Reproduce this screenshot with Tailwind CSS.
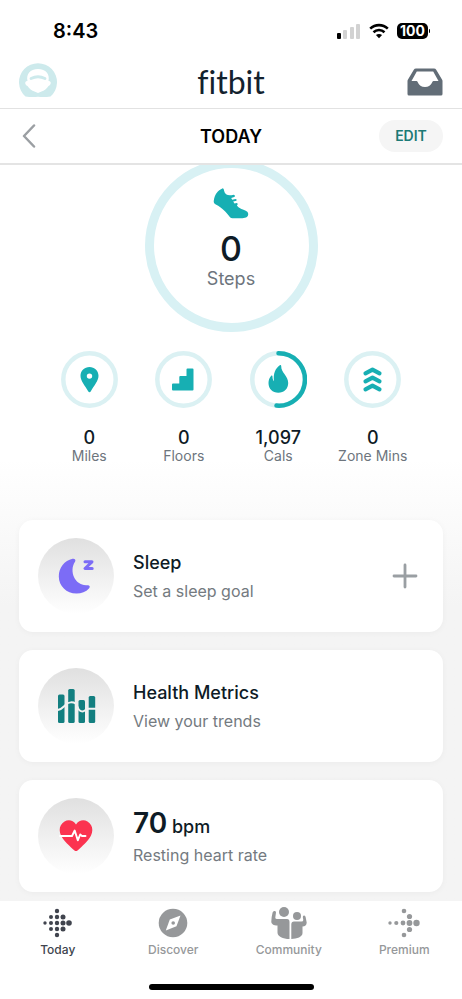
<!DOCTYPE html>
<html lang="en">
<head>
<meta charset="utf-8">
<meta name="viewport" content="width=device-width, initial-scale=1">
<title>Fitbit – Today</title>
<script src="https://cdn.jsdelivr.net/npm/@tailwindcss/browser@4"></script>
</head>
<body class="flex h-screen flex-col overflow-hidden bg-white font-['Inter','Liberation_Sans',sans-serif] text-[#0e1b26]">

<!-- Status bar -->
<div class="flex h-14 shrink-0 items-center justify-between pt-[6px] pr-8 pl-[53px] text-black">
  <span class="text-xl leading-6 font-semibold">8:43</span>
  <div class="flex items-center gap-2">
    <svg class="h-4 w-6" viewBox="0 0 24 16" aria-hidden="true">
      <rect x="0" y="10" width="4" height="6" rx="1"/>
      <g fill="#d2d2d2"><rect x="6" y="7" width="4" height="9" rx="1"/><rect x="13" y="4" width="4" height="12" rx="1"/><rect x="19" y="1" width="4" height="15" rx="1"/></g>
    </svg>
    <svg class="h-4 w-5" viewBox="0 0 20 16" fill="none" stroke="#000" stroke-width="2.6" aria-hidden="true">
      <path d="M1.200 5.600C6.200.900 13.800.900 18.800 5.600"/><path d="M4.500 9.200C7.600 6.300 12.400 6.300 15.500 9.200"/>
      <path d="M10 15.300 6.900 12.100C8.600 10.500 11.400 10.500 13.100 12.100Z" fill="#000" stroke="none"/>
    </svg>
    <div class="flex items-center gap-px">
      <span class="rounded-[5px] bg-black px-[3px] text-sm leading-4 font-bold text-white">100</span>
      <span class="h-1 w-px rounded-r bg-black"></span>
    </div>
  </div>
</div>

<!-- App header -->
<header class="grid h-[53px] shrink-0 grid-cols-[1fr_auto_1fr] items-center border-b border-[#e2e2e2] px-[19px]">
  <button aria-label="Account" class="justify-self-start">
    <svg class="size-[38px]" viewBox="0 0 38 38" aria-hidden="true">
      <path fill="#cdeaec" d="M6.500 33.500A19 19 0 1 1 31.500 33.500Q25 34.500 19 33.800 13 34.500 6.500 33.500Z"/>
      <path fill="#fff" d="M8.500 18C7 11 11 6 19 6S31 11 29.500 18C32.500 17.500 32.500 22 29.500 23 28 25.500 25 28 22.500 28.500L19 30 15.500 28.500C13 28 10 25.500 8.500 23 5.500 22 5.500 17.500 8.500 18Z"/>
      <path d="M12 15.500Q19 12 26 15.500" fill="none" stroke="#cdeaec" stroke-width="2.800" stroke-linecap="round"/>
    </svg>
  </button>
  <span class="font-['Lato',sans-serif] text-[32px] leading-10 text-[#13222e] [font-variant-ligatures:none]">fitbit</span>
  <button aria-label="Inbox" class="justify-self-end">
    <svg class="h-7 w-9" viewBox="0 0 36 28" aria-hidden="true">
      <path fill="#626d77" fill-rule="evenodd" d="M9 .500H27Q28.500.500 29.200 1.800L35 11.500Q35.500 12.300 35.500 13V26Q35.500 27.500 34 27.500H2Q.500 27.500.500 26V13Q.500 12.300 1 11.500L6.800 1.800Q7.500.500 9 .500ZM9.800 3.500 4.500 13H9.500C11.500 13 10.800 19 18 19S24.500 13 26.500 13H31.500L26.200 3.500Z"/>
    </svg>
  </button>
</header>

<!-- Date bar -->
<div class="grid h-14 shrink-0 grid-cols-[1fr_auto_1fr] items-center border-b-2 border-[#e4e4e4] px-[19px]">
  <button aria-label="Previous day" class="justify-self-start pl-[3px]">
    <svg class="h-6 w-[14px]" viewBox="0 0 14 24" fill="none" stroke="#9b9fa3" stroke-width="2.500" stroke-linecap="round" stroke-linejoin="round" aria-hidden="true"><path d="M12 1.500 2 12 12 22.500"/></svg>
  </button>
  <h1 class="pt-px text-lg leading-6 font-semibold text-black">TODAY</h1>
  <button class="h-8 w-16 justify-self-end rounded-full bg-[#f5f5f5] text-sm font-semibold text-[#1c7a76]">EDIT</button>
</div>

<main class="min-h-0 flex-1 overflow-hidden bg-linear-to-b from-white from-40% to-[#f4f4f4] to-60%">
  <!-- Steps -->
  <section class="mx-auto -mt-[6px] flex size-[173px] flex-col items-center rounded-full border-[9px] border-[#d8f1f4] pt-5" aria-label="Steps">
    <svg class="h-[31px] w-9" viewBox="0 0 36 31" fill="#17afb3" aria-hidden="true">
      <path d="M9.800.300Q11 .500 11 2.500C12 7 15.500 8.200 20.500 6.800 22.500 7 22.500 9 20.500 9.300L18.200 9.900 19.200 11.800 22.500 10.900C24 11 24 12.800 22.500 13L20.200 13.600 21.500 15.500 23.700 15C25.200 15.200 25 17 23.800 17.300 25.500 20 27.500 20.700 30.500 21.700 34 22.800 35.500 24.500 35.200 26.500 35 29.300 32 30.300 28 30.300H19.500Q18 30.300 17 29.200C13 24 9.500 20 2.800 16.500 1 15.500.500 14.300.800 12.500 1.800 6.500 4.500 2.500 9.800.300Z"/>
    </svg>
    <span class="mt-[10px] text-[34px] leading-10 font-medium">0</span>
    <span class="text-lg leading-5 text-[#6d757d]">Steps</span>
  </section>

  <!-- Daily stats -->
  <section class="mt-[19px] grid grid-cols-4 px-[42px] text-center" aria-label="Daily stats">
    <div class="flex flex-col items-center">
      <svg class="size-[57px]" viewBox="0 0 57 57" aria-hidden="true">
        <circle cx="28.500" cy="28.500" r="26.200" fill="none" stroke="#dbf1f3" stroke-width="4.500"/>
        <path fill="#17afb3" fill-rule="evenodd" d="M28.500 16C33.500 16 37.500 19.800 37.500 24.700 37.500 30 33 34.500 30 40Q28.500 42.500 27 40C24 34.500 19.500 30 19.500 24.700 19.500 19.800 23.500 16 28.500 16ZM28.500 22.400A2.700 2.700 0 1 0 28.500 27.800 2.700 2.700 0 1 0 28.500 22.400Z"/>
      </svg>
      <span class="mt-5 text-lg leading-5 font-medium">0</span>
      <span class="text-sm leading-4 text-[#6d757d]">Miles</span>
    </div>
    <div class="flex flex-col items-center">
      <svg class="size-[57px]" viewBox="0 0 57 57" aria-hidden="true">
        <circle cx="28.500" cy="28.500" r="26.200" fill="none" stroke="#dbf1f3" stroke-width="4.500"/>
        <path fill="#17afb3" d="M32.500 17.500H37.500Q38.500 17.500 38.500 18.500V38.500Q38.500 39.500 37.500 39.500H18Q17 39.500 17 38.500V33.500Q17 32.500 18 32.500H24.300V26Q24.300 25 25.300 25H31.500V18.500Q31.500 17.500 32.500 17.500Z"/>
      </svg>
      <span class="mt-5 text-lg leading-5 font-medium">0</span>
      <span class="text-sm leading-4 text-[#6d757d]">Floors</span>
    </div>
    <div class="flex flex-col items-center">
      <svg class="size-[57px]" viewBox="0 0 57 57" aria-hidden="true">
        <circle cx="28.500" cy="28.500" r="26.200" fill="none" stroke="#dbf1f3" stroke-width="4.500"/>
        <path d="M28.500 2.300A26.200 26.200 0 1 1 26.500 54.600" fill="none" stroke="#17afb3" stroke-width="4.500" stroke-linecap="round"/>
        <path fill="#17afb3" d="M29.800 14.300C30.500 13.800 31.200 14.200 31.200 15 31 22 38.200 24.500 38.200 32 38.200 37.800 34 41.800 28.300 41.800S18.500 37.800 18.500 32C18.500 29 19.500 26.800 21 25 21.700 24.300 22.500 24.600 22.500 25.500 22.500 27.500 22.800 28.800 24 30.200 23 22.500 25.500 17.200 29.800 14.300Z"/>
      </svg>
      <span class="mt-5 text-lg leading-5 font-medium">1,097</span>
      <span class="text-sm leading-4 text-[#6d757d]">Cals</span>
    </div>
    <div class="flex flex-col items-center">
      <svg class="size-[57px]" viewBox="0 0 57 57" fill="none" aria-hidden="true">
        <circle cx="28.500" cy="28.500" r="26.200" stroke="#dbf1f3" stroke-width="4.500"/>
        <path d="M21.500 22.300 28.500 18.700 35.500 22.300M21.500 30.300 28.500 26.700 35.500 30.300M21.500 38.300 28.500 34.700 35.500 38.300" stroke="#17afb3" stroke-width="4.200" stroke-linecap="round" stroke-linejoin="round"/>
      </svg>
      <span class="mt-5 text-lg leading-5 font-medium">0</span>
      <span class="text-sm leading-4 whitespace-nowrap text-[#6d757d]">Zone Mins</span>
    </div>
  </section>

  <!-- Cards -->
  <section class="mt-14 flex flex-col gap-[18px] px-[19px]" aria-label="Health">
    <article class="flex min-h-28 items-center gap-[19px] rounded-[14px] bg-white px-[19px] shadow-[0_1px_6px_rgba(0,0,0,0.04)]">
      <div class="flex size-[76px] shrink-0 items-center justify-center rounded-full bg-linear-to-b from-[#e0e0e0] to-white">
        <svg class="size-9" viewBox="0 0 36 36" aria-hidden="true">
          <path fill="#7c6cf6" d="M14.500.800C16.800.200 18.200 2 17 3.800 10.500 13.500 17.500 28.500 29.500 27.200 31.500 27 32.500 28.500 31.200 30.200 27.800 34 23.500 35.500 18.500 35.500 8.500 35.500.800 28 .800 18.500.800 9.500 6.500 2.800 14.500.800Z"/>
          <path d="M27 3.800H34L27 10.500H34.200" fill="none" stroke="#7c6cf6" stroke-width="3" stroke-linecap="round" stroke-linejoin="round"/>
        </svg>
      </div>
      <div class="flex-1 pt-[2px]">
        <h2 class="text-lg leading-6 font-medium">Sleep</h2>
        <p class="mt-1 text-base leading-6 text-[#747a80]">Set a sleep goal</p>
      </div>
      <button aria-label="Add sleep goal" class="mr-[6px]">
        <svg class="size-[26px]" viewBox="0 0 26 26" fill="none" stroke="#9a9fa3" stroke-width="2.800" stroke-linecap="round" aria-hidden="true"><path d="M13 2V24M2 13H24"/></svg>
      </button>
    </article>

    <article class="flex min-h-28 items-center gap-[19px] rounded-[14px] bg-white px-[19px] shadow-[0_1px_6px_rgba(0,0,0,0.04)]">
      <div class="flex size-[76px] shrink-0 items-center justify-center rounded-full bg-linear-to-b from-[#e0e0e0] to-white">
        <svg class="h-9 w-10" viewBox="0 0 40 36" aria-hidden="true">
          <g fill="#137f80"><rect x="2" y="6.500" width="6.500" height="28.500" rx="1.500"/><rect x="12.200" y="1" width="6.500" height="34" rx="1.500"/><rect x="22.500" y="12" width="6.500" height="23" rx="1.500"/><rect x="32.700" y="8" width="6.500" height="27" rx="1.500"/></g>
          <path d="M1 22.200C6.500 21.500 7.500 18.500 10 16.500 12.500 13.800 17 13.800 19.500 15.500M21.500 18.500C22.500 22 24 23.500 26.500 23.500 29 23.500 29.500 20.800 32.500 20.800H40" fill="none" stroke="#f2f2f2" stroke-width="1.900"/>
        </svg>
      </div>
      <div class="flex-1 pt-[2px]">
        <h2 class="text-lg leading-6 font-medium">Health Metrics</h2>
        <p class="mt-1 text-base leading-6 text-[#747a80]">View your trends</p>
      </div>
    </article>

    <article class="flex min-h-28 items-center gap-[19px] rounded-[14px] bg-white px-[19px] shadow-[0_1px_6px_rgba(0,0,0,0.04)]">
      <div class="flex size-[76px] shrink-0 items-center justify-center rounded-full bg-linear-to-b from-[#e0e0e0] to-white">
        <svg class="h-8 w-[34px]" viewBox="0 0 34 32" aria-hidden="true">
          <path fill="#fb3350" d="M17 4.500C20-.200 25-.500 28.500 1.500 33.500 4.500 34.500 10.500 32 15.500 29.500 20.500 23 26.500 18.500 30.500Q17 31.700 15.500 30.500C11 26.500 4.500 20.500 2 15.500-.500 10.500.500 4.500 5.500 1.500 9-.500 14-.200 17 4.500Z"/>
          <path d="M1 16H13L15.700 10.500 18.800 20.300 21.200 14.500 23 16H26.500" fill="none" stroke="#fff" stroke-width="1.900" stroke-linecap="round" stroke-linejoin="round"/>
        </svg>
      </div>
      <div class="flex-1 pt-[2px]">
        <h2 class="text-lg leading-8 font-medium"><span class="text-[28px] font-semibold">70</span> bpm</h2>
        <p class="text-base leading-6 text-[#747a80]">Resting heart rate</p>
      </div>
    </article>
  </section>
</main>

<!-- Tab bar -->
<footer class="flex shrink-0 flex-col items-center bg-white pt-1 pb-[9px]">
  <nav class="grid w-full grid-cols-4 text-xs leading-4 font-medium text-[#96989a]" aria-label="Main">
    <a href="#today" aria-current="page" class="flex flex-col items-center gap-px text-[#40444e]">
      <svg class="size-9" viewBox="0 0 36 36" fill="currentColor" aria-hidden="true">
        <circle cx="5" cy="18" r="1.700"/><circle cx="11" cy="12" r="2"/><circle cx="11" cy="18" r="2"/><circle cx="11" cy="24" r="2"/>
        <circle cx="17" cy="6" r="2.200"/><circle cx="17" cy="12" r="2.200"/><circle cx="17" cy="18" r="2.200"/><circle cx="17" cy="24" r="2.200"/><circle cx="17" cy="30" r="2.200"/>
        <circle cx="23" cy="12" r="2.500"/><circle cx="23" cy="18" r="2.500"/><circle cx="23" cy="24" r="2.500"/><circle cx="29" cy="18" r="2.800"/>
      </svg>
      <span>Today</span>
    </a>
    <a href="#discover" class="flex flex-col items-center gap-px">
      <svg class="size-9" viewBox="0 0 36 36" aria-hidden="true">
        <circle cx="18" cy="18" r="14.300" fill="currentColor"/>
        <path fill="#fff" d="M25.500 10.500 21.500 21.300 10.800 25.500 14.800 14.500Z"/><circle cx="18.200" cy="18" r="1.800" fill="currentColor"/>
      </svg>
      <span>Discover</span>
    </a>
    <a href="#community" class="flex flex-col items-center gap-px">
      <svg class="size-9" viewBox="0 0 36 36" fill="currentColor" aria-hidden="true">
        <circle cx="13" cy="7" r="5"/><circle cx="26" cy="11" r="4"/>
        <path d="M3.300 6Q5 5.500 5 7.500L4.300 12.500Q4.300 14 6 14H16Q18.500 14 18.500 17V34C12 34 6.500 31.500 6.500 27.500V20.500C2.500 20.500.300 19 .300 16.500Q.500 11.500 1.600 7.500 2 6.200 3.300 6Z"/>
        <path d="M20.300 34V19.500Q20.300 16.500 23 16.500H30.500Q32.300 16.500 32.300 15L31.800 12Q31.800 10.300 33.200 10.500 34.300 10.700 34.600 12L35.700 17.500C35.700 20 34 21.500 31.500 21.500V28C31.500 32 26 33.800 20.300 34Z"/>
      </svg>
      <span>Community</span>
    </a>
    <a href="#premium" class="flex flex-col items-center gap-px">
      <svg class="size-9" viewBox="0 0 36 36" fill="currentColor" aria-hidden="true">
        <circle cx="4" cy="18" r="1.700"/><circle cx="10.300" cy="18" r="2.100"/><circle cx="17" cy="18" r="2.400"/><circle cx="23.500" cy="18" r="2.900"/><circle cx="30.500" cy="18" r="3.200"/>
        <circle cx="18" cy="6" r="2.300"/><circle cx="23.500" cy="11.500" r="2.600"/><circle cx="23.500" cy="24.500" r="2.600"/><circle cx="18" cy="30" r="2.300"/>
      </svg>
      <span>Premium</span>
    </a>
  </nav>
  <div class="mt-[26px] h-[6px] w-[165px] rounded-full bg-black"></div>
</footer>
</body>
</html>
